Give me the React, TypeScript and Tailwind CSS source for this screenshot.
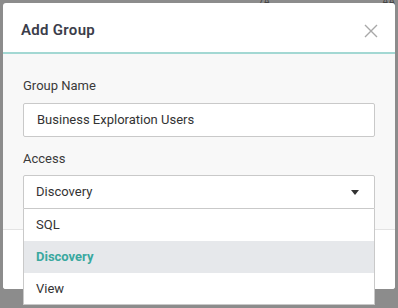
import React from "react";

export default function App() {
  const font = { fontFamily: "Roboto, 'Noto Sans', sans-serif" };
  return (
    <div className="w-[398px] h-[308px] bg-[#8c8c8c] relative overflow-hidden pt-[3px] pl-[3px]" style={font}>
      <div className="absolute top-[-6px] left-[258px] text-[10px] text-[#444]">7A</div>
      <div className="absolute top-[-6px] left-[382px] text-[10px] text-[#444]">AA</div>
      <div className="relative w-[392px] h-[286px] bg-white rounded-[3px] flex flex-col">
        <div className="h-[51px] flex items-center justify-between pt-[5px] pl-[18px] pr-[17px] border-b-2 border-[#a3d8d3] shrink-0">
          <span className="text-[15px] font-semibold text-[#3b3d4a] tracking-[0.3px]">Add Group</span>
          <svg width="14" height="14" viewBox="0 0 14 14" className="mt-[1px]">
            <path d="M1 1 L13 13 M13 1 L1 13" stroke="#a8a8a8" strokeWidth="1.4" />
          </svg>
        </div>
        <div className="bg-[#f8f8f8] h-[176px] px-[20px] pt-[24px] shrink-0 border-b border-[#e3e3e3]">
          <div className="text-[13px] text-[#3a3a3a] leading-[16px]">Group Name</div>
          <div className="mt-[9px] h-[34px] bg-white border border-[#c9c9c9] rounded-[2px] flex items-center px-[13px] text-[13px] text-[#333]">
            Business Exploration Users
          </div>
          <div className="mt-[14px] text-[13px] text-[#3a3a3a] leading-[16px]">Access</div>
          <div className="relative mt-[8px]">
            <div className="h-[34px] bg-white border border-[#c9c9c9] rounded-t-[2px] flex items-center justify-between pl-[12px] pr-[15px] text-[13px] text-[#333]">
              <span>Discovery</span>
              <svg width="8" height="5" viewBox="0 0 8 5">
                <path d="M0 0 L8 0 L4 5 Z" fill="#333" />
              </svg>
            </div>
            <div className="absolute left-0 right-0 top-full bg-white border border-t-0 border-[#c9c9c9] text-[13px] text-[#333] z-10">
              <div className="h-[32px] flex items-center px-[12px]">SQL</div>
              <div className="h-[32px] flex items-center px-[12px] bg-[#e6e8eb] text-[#3aa89f] font-bold">Discovery</div>
              <div className="h-[31px] flex items-center px-[12px]">View</div>
            </div>
          </div>
        </div>
        <div className="flex-1 bg-white rounded-b-[3px]" />
      </div>
    </div>
  );
}
